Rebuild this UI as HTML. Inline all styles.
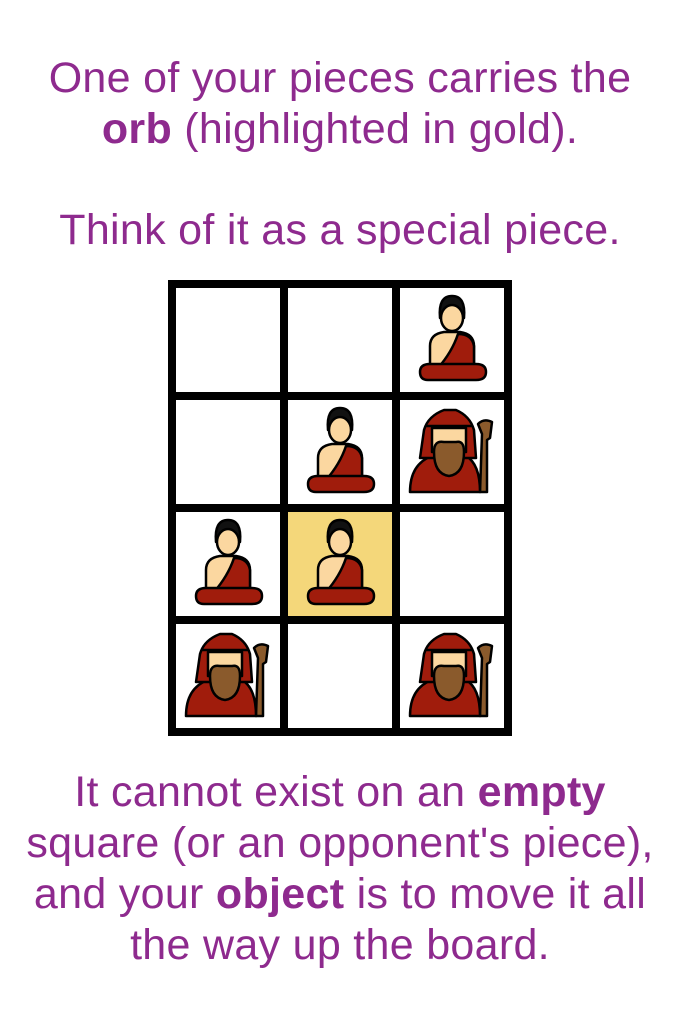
<!DOCTYPE html>
<html><head><meta charset="utf-8"><style>
body{margin:0;width:680px;height:1016px;background:#fff;font-family:"Liberation Sans",sans-serif;color:#8e2a8e;position:relative;overflow:hidden}
.t{position:absolute;left:0;width:680px;text-align:center;font-size:43px;line-height:51px;letter-spacing:0.3px;white-space:nowrap}
b{font-weight:bold}
.grid{position:absolute;left:168px;top:280px;width:344px;height:456px;background:#000}
.c{position:absolute;width:104px;height:104px;background:#fff}
.c svg{width:104px;height:104px;display:block}
</style></head><body>
<svg width="0" height="0" style="position:absolute">
<defs>
<g id="monk" stroke="#000" stroke-width="2.5" stroke-linejoin="round">
<path d="M40 30 Q38 8 52 8 Q66 8 64 30 Z" fill="#111"/>
<ellipse cx="52" cy="30" rx="11" ry="13" fill="#fbd7a0"/>
<path d="M30 80 L30 58 Q30 46 44 44 L60 44 Q74 46 74 58 L74 80 Z" fill="#fbd7a0"/>
<path d="M38 80 Q52 64 58 46 Q72 46 74 58 L74 80 Z" fill="#a01c0c"/>
<path d="M20 84 Q20 76 30 76 L76 76 Q86 76 86 84 Q86 92 76 92 L28 92 Q20 92 20 84 Z" fill="#a01c0c"/>
</g>
<g id="bish" stroke="#000" stroke-width="2.5" stroke-linejoin="round">
<path d="M80 92 L82 34 L78 24 Q84 18 92 22 L90 38 L87 40 L87 92 Z" fill="#8a5a2c"/>
<path d="M10 92 Q10 64 32 56 L66 56 Q80 64 80 92 Z" fill="#a01c0c"/>
<path d="M20 58 L24 30 Q28 16 44 10 L56 10 Q70 16 74 30 L76 58 Z" fill="#a01c0c"/>
<rect x="32" y="28" width="34" height="24" fill="#fbd7a0"/>
<path d="M34 52 Q34 40 44 42 L56 42 Q64 40 64 52 Q64 74 49 76 Q34 74 34 52 Z" fill="#8a5a2c"/>
<line x1="26" y1="26" x2="72" y2="26"/>
</g>
</defs></svg>
<div class="t" style="top:53px">One of your pieces carries the</div>
<div class="t" style="top:104px"><b>orb</b> (highlighted in gold).</div>
<div class="t" style="top:205px">Think of it as a special piece.</div>
<div class="grid">
<div class="c" style="left:8px;top:8px"></div>
<div class="c" style="left:120px;top:8px"></div>
<div class="c" style="left:232px;top:8px"><svg><use href="#monk"/></svg></div>
<div class="c" style="left:8px;top:120px"></div>
<div class="c" style="left:120px;top:120px"><svg><use href="#monk"/></svg></div>
<div class="c" style="left:232px;top:120px"><svg><use href="#bish"/></svg></div>
<div class="c" style="left:8px;top:232px"><svg><use href="#monk"/></svg></div>
<div class="c" style="left:120px;top:232px;background:#f4d77a"><svg><use href="#monk"/></svg></div>
<div class="c" style="left:232px;top:232px"></div>
<div class="c" style="left:8px;top:344px"><svg><use href="#bish"/></svg></div>
<div class="c" style="left:120px;top:344px"></div>
<div class="c" style="left:232px;top:344px"><svg><use href="#bish"/></svg></div>
</div>
<div class="t" style="top:767px">It cannot exist on an <b>empty</b></div>
<div class="t" style="top:818px">square (or an opponent's piece),</div>
<div class="t" style="top:869px">and your <b>object</b> is to move it all</div>
<div class="t" style="top:920px">the way up the board.</div>
</body></html>
